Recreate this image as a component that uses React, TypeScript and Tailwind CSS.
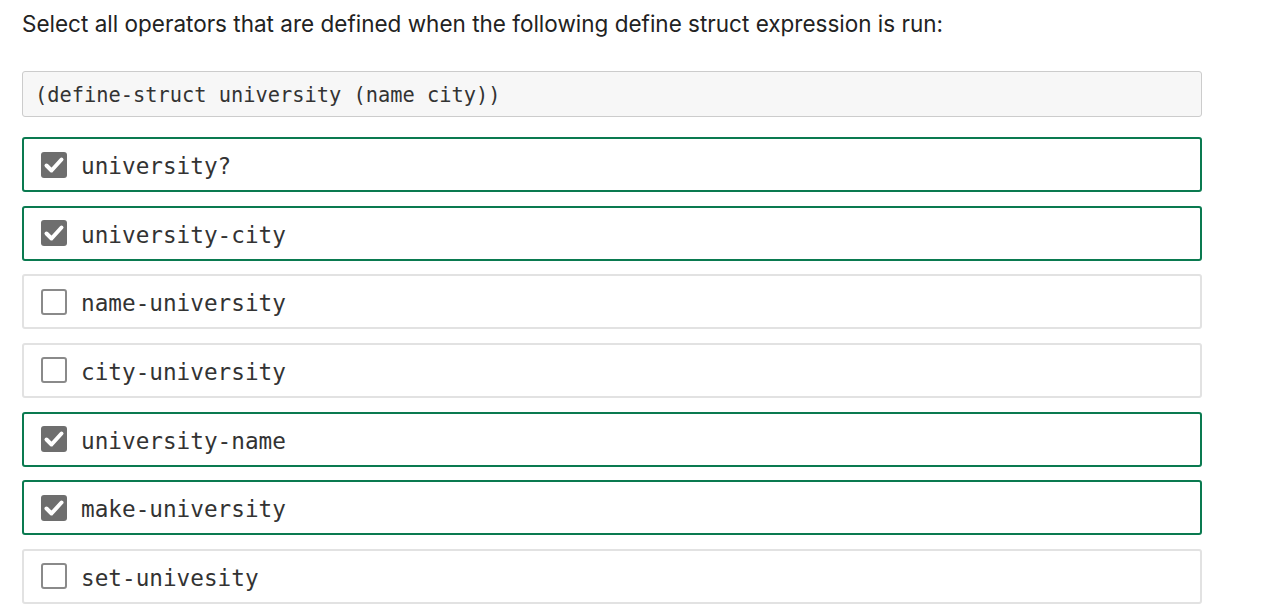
import React from 'react'

const OPTIONS: { label: string; checked: boolean }[] = [
  { label: 'university?', checked: true },
  { label: 'university-city', checked: true },
  { label: 'name-university', checked: false },
  { label: 'city-university', checked: false },
  { label: 'university-name', checked: true },
  { label: 'make-university', checked: true },
  { label: 'set-univesity', checked: false },
]

const MONO = "font-['DejaVu_Sans_Mono',monospace]"

function Box({ checked }: { checked: boolean }) {
  if (checked) {
    return (
      <span className="w-[26px] h-[26px] rounded-[3px] bg-[#6e6e6e] shrink-0">
        <svg width="26" height="26" viewBox="0 0 26 26" fill="none">
          <path d="M5.5 13.5l5 5L20.5 7.5" stroke="#fff" strokeWidth="4" strokeLinecap="round" strokeLinejoin="round" />
        </svg>
      </span>
    )
  }
  return <span className="w-[26px] h-[26px] rounded-[3px] border-2 border-[#8a8a8a] bg-white shrink-0" />
}

export default function App() {
  return (
    <div className="bg-white min-h-screen w-[1263px] h-[610px] overflow-hidden pl-[22px] pt-[8px] text-[#222]">
      <p className="font-['Inter',sans-serif] text-[22.5px] leading-[32px]">
        Select all operators that are defined when the following define struct expression is run:
      </p>

      <div className="mt-[31px] w-[1180px] h-[46px] border border-[#cccccc] rounded-[3px] bg-[#f7f7f7] flex items-center px-[12px] pt-[2px]">
        <code className={`${MONO} text-[20.35px] text-[#333]`}>(define-struct university (name city))</code>
      </div>

      <div className="mt-[20px] w-[1180px] flex flex-col gap-[13.67px]">
        {OPTIONS.map((o) => (
          <label
            key={o.label}
            className={`h-[55px] rounded-[3px] border-2 flex items-center gap-[14px] px-[17px] ${
              o.checked ? 'border-[#0a7a50]' : 'border-[#e2e2e2]'
            }`}
          >
            <Box checked={o.checked} />
            <span className={`${MONO} text-[22.7px] text-[#333] pt-[3px]`}>{o.label}</span>
          </label>
        ))}
      </div>
    </div>
  )
}
